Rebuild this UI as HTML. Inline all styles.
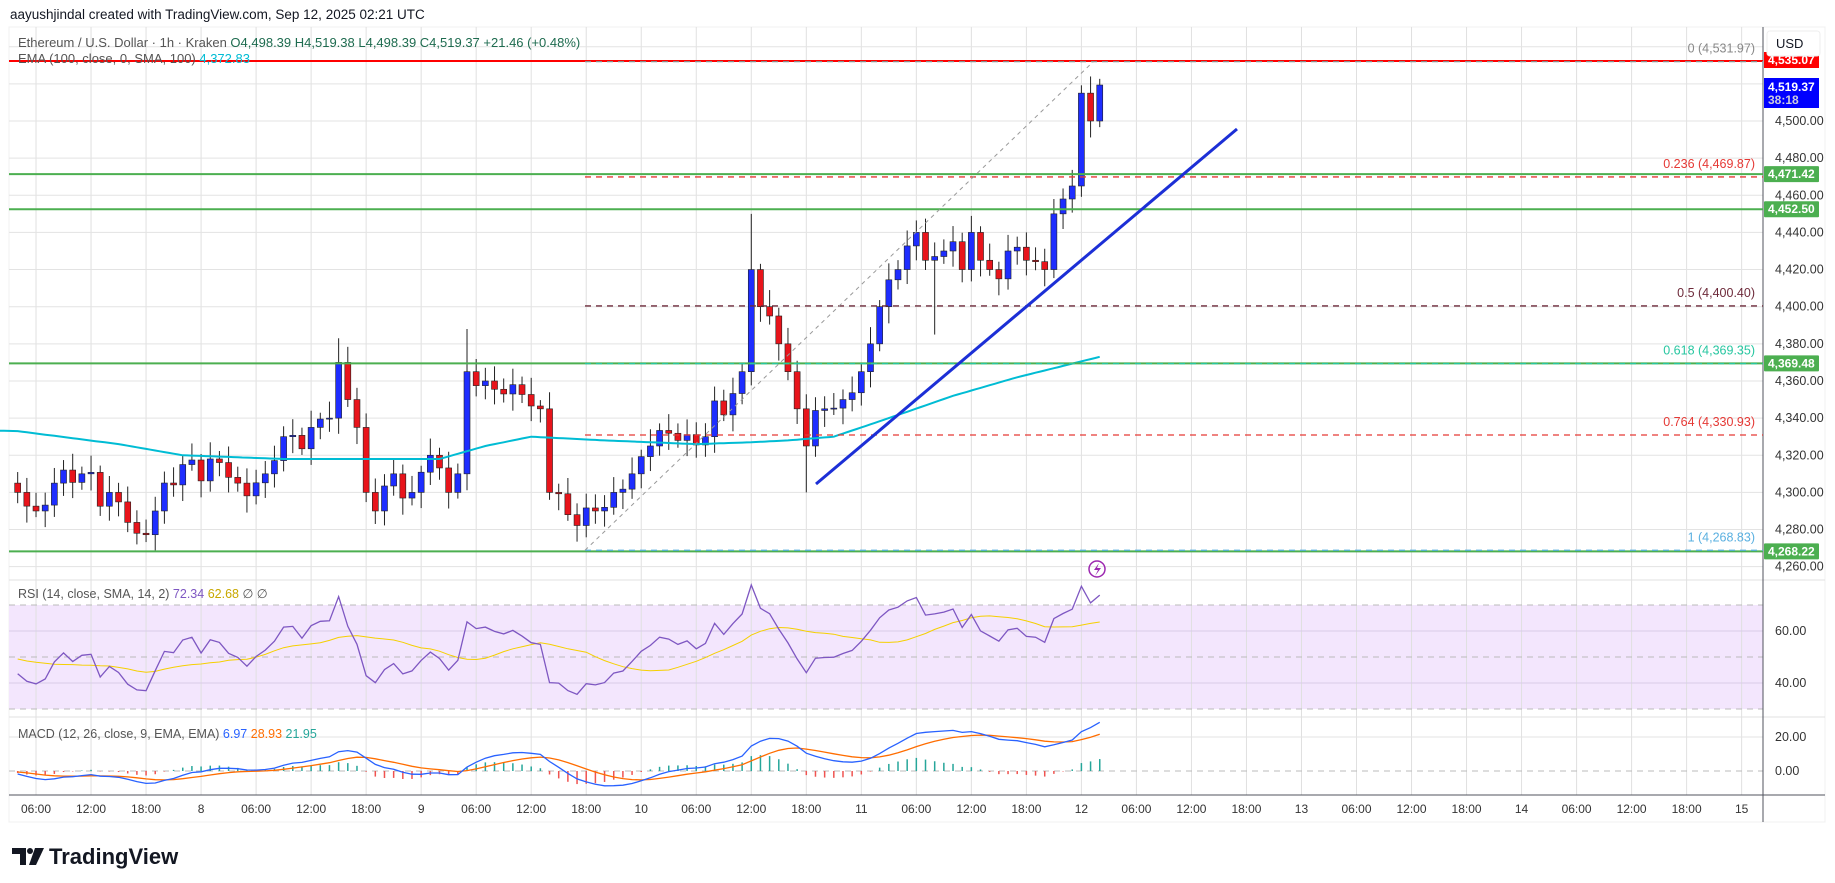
<!DOCTYPE html>
<html><head><meta charset="utf-8">
<style>
html,body{margin:0;padding:0;background:#fff;width:1835px;height:883px;overflow:hidden;font-family:"Liberation Sans",Arial,sans-serif;}
svg{position:absolute;left:0;top:0}
</style></head>
<body>
<svg id="s" width="1835" height="883" xmlns="http://www.w3.org/2000/svg" font-family="Liberation Sans, Arial, sans-serif"></svg>
<script>
var S=document.getElementById('s');var out=[];
function el(s){out.push(s);}
var L=9,R=1763,TOP=27,PB=580,RB=717,MB=795;
function Y(p){return 121+(4500-p)*1.857;}
function X(t){return -19+9.17*t;}
el('<rect x="9" y="27" width="1816" height="795" fill="#fff" stroke="#f0f0f0"/>');
el('<rect x="9" y="605" width="1754" height="104" fill="#f3e6fd"/>');
var labels=[];
for(var t=6;t<=192;t+=6){var x=X(t);el('<line x1="'+x+'" y1="'+TOP+'" x2="'+x+'" y2="'+MB+'" stroke="#e0e0e0" stroke-width="1"/>');
var h=t%24;labels.push([x,h==0?String(7+t/24):(h<10?'0':'')+h+':00']);}
for(var p=4260;p<=4540;p+=20){var y=Y(p);if(y>TOP&&y<PB)el('<line x1="9" y1="'+y+'" x2="1763" y2="'+y+'" stroke="#e3e3e3"/>');}
el('<line x1="9" y1="580" x2="1825" y2="580" stroke="#e0e0e0"/><line x1="9" y1="717" x2="1825" y2="717" stroke="#e0e0e0"/>');
el('<line x1="9" y1="631" x2="1763" y2="631" stroke="#d8cce8"/><line x1="9" y1="683" x2="1763" y2="683" stroke="#d8cce8"/>');
[605,657,709].forEach(function(y){el('<line x1="9" y1="'+y+'" x2="1763" y2="'+y+'" stroke="#bbb" stroke-dasharray="6,5"/>');});
el('<line x1="9" y1="737" x2="1763" y2="737" stroke="#e3e3e3"/><line x1="9" y1="771" x2="1763" y2="771" stroke="#bbb" stroke-dasharray="6,5"/>');
el('<line x1="1763" y1="27" x2="1763" y2="822" stroke="#50535e"/><line x1="9" y1="795" x2="1825" y2="795" stroke="#50535e"/>');
labels.forEach(function(l){el('<text x="'+l[0]+'" y="813" font-size="12" fill="#333" text-anchor="middle">'+l[1]+'</text>');});
var kp=[[4,4300],[6,4290],[8,4305],[11,4310],[14,4300],[17,4278],[19,4290],[22,4315],[25,4318],[28,4305],[31,4310],[33,4330],[36,4335],[38,4340],[39,4370],[40,4350],[41,4335],[42,4300],[43,4290],[45,4310],[47,4300],[49,4320],[51,4300],[52,4310],[53,4365],[55,4360],[58,4358],[61,4345],[62,4300],[64,4288],[67,4290],[69,4300],[71,4310],[73,4325],[76,4328],[79,4330],[83,4365],[84,4420],[85,4400],[86,4395],[87,4380],[88,4365],[89,4345],[90,4325],[92,4345],[94,4350],[96,4365],[97,4380],[98,4400],[100,4420],[102,4440],[103,4425],[105,4430],[106,4435],[107,4420],[108,4440],[109,4425],[110,4420],[111,4415],[112,4430],[114,4425],[116,4420],[117,4450],[118,4458],[119,4465],[120,4515],[121,4500],[122,4519.37]];
function interp(t){for(var i=0;i<kp.length-1;i++){if(t>=kp[i][0]&&t<=kp[i+1][0]){var a=kp[i],b=kp[i+1];return a[1]+(b[1]-a[1])*(t-a[0])/(b[0]-a[0]);}}return kp[kp.length-1][1];}
var kset={};kp.forEach(function(k){kset[k[0]]=1;});
var closes=[],ts=[];
for(var t=4;t<=122;t++){var c=interp(t);if(!kset[t])c+=7*Math.sin(t*2.3)+4*Math.cos(t*5.1);closes.push(c);ts.push(t);}
var wick={39:4383,84:4450,53:4388,90:4300,104:4385,17:4272,62:4296,43:4283};
var prev=4305;
for(var i=0;i<closes.length;i++){var t=ts[i],o=prev,c=closes[i];var hi=Math.max(o,c)+3+Math.abs(6*Math.sin(t*1.7)),lo=Math.min(o,c)-3-Math.abs(6*Math.cos(t*1.3));
if(wick[t]){if(wick[t]>Math.max(o,c))hi=wick[t];else lo=wick[t];}
var up=c>=o,col=up?'#1e2dff':'#e8141b';var x=X(t);
el('<line x1="'+x+'" y1="'+Y(hi)+'" x2="'+x+'" y2="'+Y(lo)+'" stroke="#222" stroke-width="1"/>');
var y1=Y(Math.max(o,c)),hh=Math.max(1,Y(Math.min(o,c))-y1);
el('<rect x="'+(x-3)+'" y="'+y1+'" width="6" height="'+hh+'" fill="'+col+'" stroke="#222" stroke-width="0.6"/>');prev=c;}
var ek=[[4,4333],[15,4326],[22,4320],[33,4318],[50,4318],[55,4325],[60,4330],[68,4328],[78,4326],[84,4327],[88,4328],[93,4330],[99,4340],[106,4352],[113,4362],[122,4373]];
var d='';for(var t=1;t<=122;t+=0.5){var v;for(var i=0;i<ek.length-1;i++){if(t<=ek[0][0]){v=ek[0][1]+0.1*(ek[0][0]-t);break;}if(t>=ek[i][0]&&t<=ek[i+1][0]){v=ek[i][1]+(ek[i+1][1]-ek[i][1])*(t-ek[i][0])/(ek[i+1][0]-ek[i][0]);break;}}
d+=(d?'L':'M')+X(t).toFixed(1)+','+Y(v).toFixed(1);}
el('<path d="'+d+'" fill="none" stroke="#00bcd4" stroke-width="2"/>');
el('<line x1="9" y1="61" x2="1763" y2="61" stroke="#ff0000" stroke-width="2"/>');
[4471.42,4452.5,4369.48,4268.22].forEach(function(p){el('<line x1="9" y1="'+Y(p)+'" x2="1763" y2="'+Y(p)+'" stroke="#4caf50" stroke-width="2"/>');});
var fx=585;
[[4531.97,'#888','0 (4,531.97)'],[4469.87,'#e53935','0.236 (4,469.87)'],[4400.4,'#6d2a3a','0.5 (4,400.40)'],[4369.35,'#26c6a0','0.618 (4,369.35)'],[4330.93,'#e53935','0.764 (4,330.93)'],[4268.83,'#5ab0e0','1 (4,268.83)']].forEach(function(f){var y=Y(f[0]);
el('<line x1="'+fx+'" y1="'+y+'" x2="1763" y2="'+y+'" stroke="'+f[1]+'" stroke-width="1.3" stroke-dasharray="6,5"/>');
el('<text x="1755" y="'+(y-9)+'" font-size="12.5" fill="'+f[1]+'" text-anchor="end">'+f[2]+'</text>');});
el('<line x1="'+fx+'" y1="'+Y(4268.83)+'" x2="'+X(121.3)+'" y2="'+Y(4531.97)+'" stroke="#999" stroke-width="1" stroke-dasharray="4,4"/>');
el('<line x1="816" y1="484" x2="1237" y2="129" stroke="#1c2fd6" stroke-width="3"/>');
el('<circle cx="1097" cy="569" r="8" fill="none" stroke="#9c27b0" stroke-width="1.5"/><path d="M1099,563 L1094,570 L1098,570 L1095,576 L1101,568 L1097,568 Z" fill="#9c27b0"/>');
var all=[];for(var i=0;i<80;i++)all.push(4315+8*Math.sin(i*1.9)+5*Math.cos(i*0.7));all=all.concat(closes);var off=80;
var ag=0,al=0,rsi=[];for(var i=1;i<all.length;i++){var ch=all[i]-all[i-1],g=Math.max(ch,0),l=Math.max(-ch,0);ag=(ag*13+g)/14;al=(al*13+l)/14;rsi[i]=al==0?100:100-100/(1+ag/al);}
function RY(v){return 657-(v-50)*2.6;}
var d1='',d2='';for(var i=off;i<all.length;i++){var t=ts[i-off];d1+=(d1?'L':'M')+X(t)+','+RY(rsi[i]).toFixed(1);var s=0;for(var k=0;k<14;k++)s+=rsi[i-k];d2+=(d2?'L':'M')+X(t)+','+RY(s/14).toFixed(1);}
el('<path d="'+d2+'" fill="none" stroke="#f5d000" stroke-width="1"/><path d="'+d1+'" fill="none" stroke="#7e57c2" stroke-width="1.3"/>');
function ema(a,n){var k=2/(n+1),r=[a[0]];for(var i=1;i<a.length;i++)r.push(a[i]*k+r[i-1]*(1-k));return r;}
var e12=ema(all,12),e26=ema(all,26),m=all.map(function(v,i){return e12[i]-e26[i];}),sg=ema(m,9);
function MY(v){return 771-v*1.7;}
var dm='',ds='';for(var i=off;i<all.length;i++){var t=ts[i-off],x=X(t),hv=m[i]-sg[i];
el('<line x1="'+x+'" y1="771" x2="'+x+'" y2="'+MY(hv)+'" stroke="'+(hv>=0?'#26a69a':'#ef5350')+'" stroke-width="1.5"/>');
dm+=(dm?'L':'M')+x+','+MY(m[i]).toFixed(1);ds+=(ds?'L':'M')+x+','+MY(sg[i]).toFixed(1);}
el('<path d="'+ds+'" fill="none" stroke="#ff6d00" stroke-width="1.3"/><path d="'+dm+'" fill="none" stroke="#2962ff" stroke-width="1.3"/>');
for(var p=4260;p<=4500;p+=20){el('<text x="1775" y="'+(Y(p)+4)+'" font-size="12.5" fill="#333">'+p.toLocaleString('en-US')+'.00</text>');}
[[631,'60.00'],[683,'40.00'],[737,'20.00'],[771,'0.00']].forEach(function(a){el('<text x="1775" y="'+(a[0]+4)+'" font-size="12.5" fill="#333">'+a[1]+'</text>');});
el('<rect x="1764" y="52" width="55" height="16" fill="#ff0000"/><text x="1768" y="64" font-size="12" fill="#fff" font-weight="bold">4,535.07</text>');
el('<rect x="1764" y="78" width="55" height="30" fill="#0000ff"/><text x="1768" y="91" font-size="12" fill="#fff" font-weight="bold">4,519.37</text><text x="1768" y="104" font-size="12" fill="#ccd" font-weight="bold">38:18</text>');
[[4471.42,'4,471.42'],[4452.5,'4,452.50'],[4369.48,'4,369.48'],[4268.22,'4,268.22']].forEach(function(b){var y=Y(b[0]);el('<rect x="1764" y="'+(y-8)+'" width="55" height="16" rx="1" fill="#4caf50"/><text x="1768" y="'+(y+4)+'" font-size="12" fill="#fff" font-weight="bold">'+b[1]+'</text>');});
el('<rect x="1767" y="31" width="53" height="25" rx="3" fill="#fff" stroke="#eee"/><text x="1776" y="48" font-size="13" fill="#131722">USD</text>');
el('<text x="10" y="19" font-size="13.5" fill="#131722">aayushjindal created with TradingView.com, Sep 12, 2025 02:21 UTC</text>');
el('<text x="18" y="47" font-size="13" fill="#555">Ethereum / U.S. Dollar · 1h · Kraken <tspan fill="#1e6b4f">O4,498.39 H4,519.38 L4,498.39 C4,519.37 +21.46 (+0.48%)</tspan></text>');
el('<text x="18" y="63" font-size="13" fill="#555">EMA (100, close, 0, SMA, 100) <tspan fill="#00bcd4">4,372.83</tspan></text>');
el('<text x="18" y="598" font-size="12.5" fill="#555">RSI (14, close, SMA, 14, 2) <tspan fill="#7e57c2">72.34</tspan> <tspan fill="#c8a800">62.68</tspan> ∅ ∅</text>');
el('<text x="18" y="738" font-size="12.5" fill="#555">MACD (12, 26, close, 9, EMA, EMA) <tspan fill="#2962ff">6.97</tspan> <tspan fill="#ff6d00">28.93</tspan> <tspan fill="#26a69a">21.95</tspan></text>');
el('<path d="M12,848 h14 v17 h-6 v-11 h-8 z" fill="#131722"/><circle cx="30" cy="851" r="3" fill="#131722"/><path d="M35,848 h9 l-8,17 h-7 z" fill="#131722"/>');
el('<text x="49" y="864" font-size="22" font-weight="bold" fill="#131722">TradingView</text>');
S.innerHTML=out.join('');
</script>
</body></html>
